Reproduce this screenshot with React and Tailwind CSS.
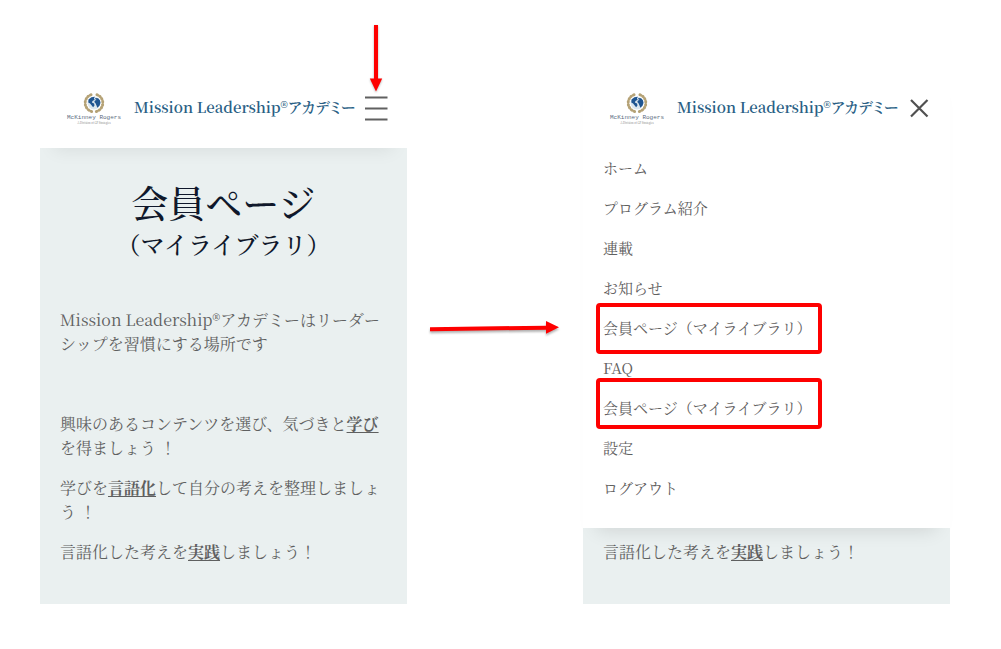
const menuItems = [
  { label: "ホーム" },
  { label: "プログラム紹介" },
  { label: "連載" },
  { label: "お知らせ" },
  { label: "会員ページ（マイライブラリ）", mark: "-top-[5px]" },
  { label: "FAQ" },
  { label: "会員ページ（マイライブラリ）", mark: "-top-[10px]" },
  { label: "設定" },
  { label: "ログアウト" },
];

const leafAngles = [0, 20, 40, 60, 80, 100, 120, 140];

const Logo = () => (
  <svg
    viewBox="0 0 60 34"
    className="h-[34px] w-[60px] shrink-0"
    role="img"
    aria-label="McKinney Rogers"
  >
    {/* laurel */}
    <g fill="#b5a276">
      {leafAngles.map((angle) => (
        <g key={angle}>
          <ellipse cx="30" cy="3.200" rx="1.900" ry="1.500" transform={`rotate(${angle + 22} 30 12)`} />
          <ellipse cx="30" cy="3.200" rx="1.900" ry="1.500" transform={`rotate(${-angle - 22} 30 12)`} />
        </g>
      ))}
    </g>
    {/* globe */}
    <circle cx="30" cy="12" r="6.500" fill="#dbe6ee" />
    <path
      d="M24.500 8.500l3-2.300 3.400-.4-1 1.700.8 1.200-2.200 1.300-.6 1.600 2.200.8.400 2-1.400 1.800-1.400-1.800-1.600-2-1.800-.8zM31.500 7l2.600.2 1.800 2 .6 2.600-1 3-2.200 2-.9-2.500-.9-2-1.200-1.200.6-1.600 1.700-.6-1.500-.9z"
      fill="#1f5591"
    />
    <text
      x="30"
      y="28"
      textAnchor="middle"
      fill="#5b6a80"
      className="font-['Liberation_Mono',monospace] text-[6px]"
    >
      McKinney Rogers
    </text>
    <text
      x="30"
      y="33"
      textAnchor="middle"
      fill="#8a8a8a"
      className="font-['Liberation_Serif',serif] text-[3px]"
    >
      A Division of GP Strategies
    </text>
  </svg>
);

const SiteHeader = ({ children }) => (
  <div className="flex h-20 items-center pl-6 pr-[18px]">
    <Logo />
    <p className="ml-[10px] whitespace-nowrap pb-[2px] text-[15px] leading-6 font-semibold text-[#2a5f85] [font-feature-settings:'palt']">
      Mission Leadership®アカデミー
    </p>
    {children}
  </div>
);

const DownArrow = () => (
  <svg
    viewBox="0 0 20 68"
    className="pointer-events-none absolute bottom-full left-1/2 h-[68px] w-5 -translate-x-1/2 drop-shadow-[0_1px_1px_rgba(0,0,0,0.3)]"
    aria-hidden="true"
  >
    <path d="M7 1h4v53.500h4.200l-6.200 13-6.200-13H7z" fill="#fe0000" />
  </svg>
);

const RightArrow = () => (
  <svg
    viewBox="0 0 130 16"
    className="h-4 w-[130px] drop-shadow-[0_2px_1px_rgba(0,0,0,0.3)]"
    aria-hidden="true"
  >
    <path d="M0 7.200l116-1.500V1l13 6.200-13 6.500V9.700L0 11.200z" fill="#fe0000" />
  </svg>
);

const Keyword = ({ children }) => (
  <strong className="font-bold underline underline-offset-2">{children}</strong>
);

const PracticeText = () => (
  <p>
    言語化した考えを<Keyword>実践</Keyword>しましょう！
  </p>
);

const App = () => {
  return (
    <div className="min-h-screen bg-white pt-[68px] pb-10 pl-10 pr-[51px] font-['Noto_Serif_CJK_JP','Noto_Serif_JP','Liberation_Serif','Noto_Sans_CJK_JP',serif] text-[#5f6060]">
      <div className="grid grid-cols-[367fr_176fr_367fr] items-start">
        <section className="bg-[#eaf0f0]">
          <header className="relative bg-white shadow-[0_16px_18px_-14px_rgba(0,0,0,0.08)]">
            <SiteHeader>
              <button
                type="button"
                aria-label="メニューを開く"
                className="relative ml-auto h-8 w-6 shrink-0"
              >
                <DownArrow />
                <svg viewBox="0 0 24 32" className="h-8 w-6" aria-hidden="true">
                  <path d="M0 5.500h22.500M0 16.500h22.500M0 27.500h22.500" stroke="#606060" strokeWidth="2.200" />
                </svg>
              </button>
            </SiteHeader>
          </header>

          <main className="px-5 pt-[30px] pb-10">
            <h1 className="text-center font-medium text-[#10182b]">
              <span className="block text-[37px] leading-12">会員ページ</span>
              <span className="block text-2xl leading-9">（マイライブラリ）</span>
            </h1>
            <div className="mt-[46px] space-y-4 text-base leading-6">
              <p className="mb-14">
                Mission Leadership®アカデミーはリーダーシップを習慣にする場所です
              </p>
              <p>
                興味のあるコンテンツを選び、気づきと<Keyword>学び</Keyword>を得ましょう ！
              </p>
              <p>
                学びを<Keyword>言語化</Keyword>して自分の考えを整理しましょう ！
              </p>
              <PracticeText />
            </div>
          </main>
        </section>

        <div className="flex justify-center pt-[252px]">
          <RightArrow />
        </div>

        <section className="bg-[#eaf0f0]">
          <header className="relative bg-white pb-5 shadow-[0_16px_18px_-14px_rgba(0,0,0,0.12)]">
            <SiteHeader>
              <button
                type="button"
                aria-label="メニューを閉じる"
                className="ml-auto h-6 w-6 shrink-0"
              >
                <svg viewBox="0 0 24 24" className="h-6 w-6" aria-hidden="true">
                  <path d="M3 4l16.500 16.500M19.500 4L3 20.500" stroke="#505050" strokeWidth="2.200" />
                </svg>
              </button>
            </SiteHeader>
            <nav className="px-5">
              <ul>
                {menuItems.map((item, index) => (
                  <li key={index} className="relative flex h-10 items-center">
                    <a href="#" className="text-[15px] leading-6">
                      {item.label}
                    </a>
                    {item.mark && (
                      <span
                        className={`pointer-events-none absolute -left-[7px] h-[51px] w-[226px] rounded-sm border-4 border-[#fe0000] ${item.mark}`}
                      />
                    )}
                  </li>
                ))}
              </ul>
            </nav>
          </header>
          <div className="px-5 pt-3 pb-10 text-base leading-6">
            <PracticeText />
          </div>
        </section>
      </div>
    </div>
  );
};

export default App;
